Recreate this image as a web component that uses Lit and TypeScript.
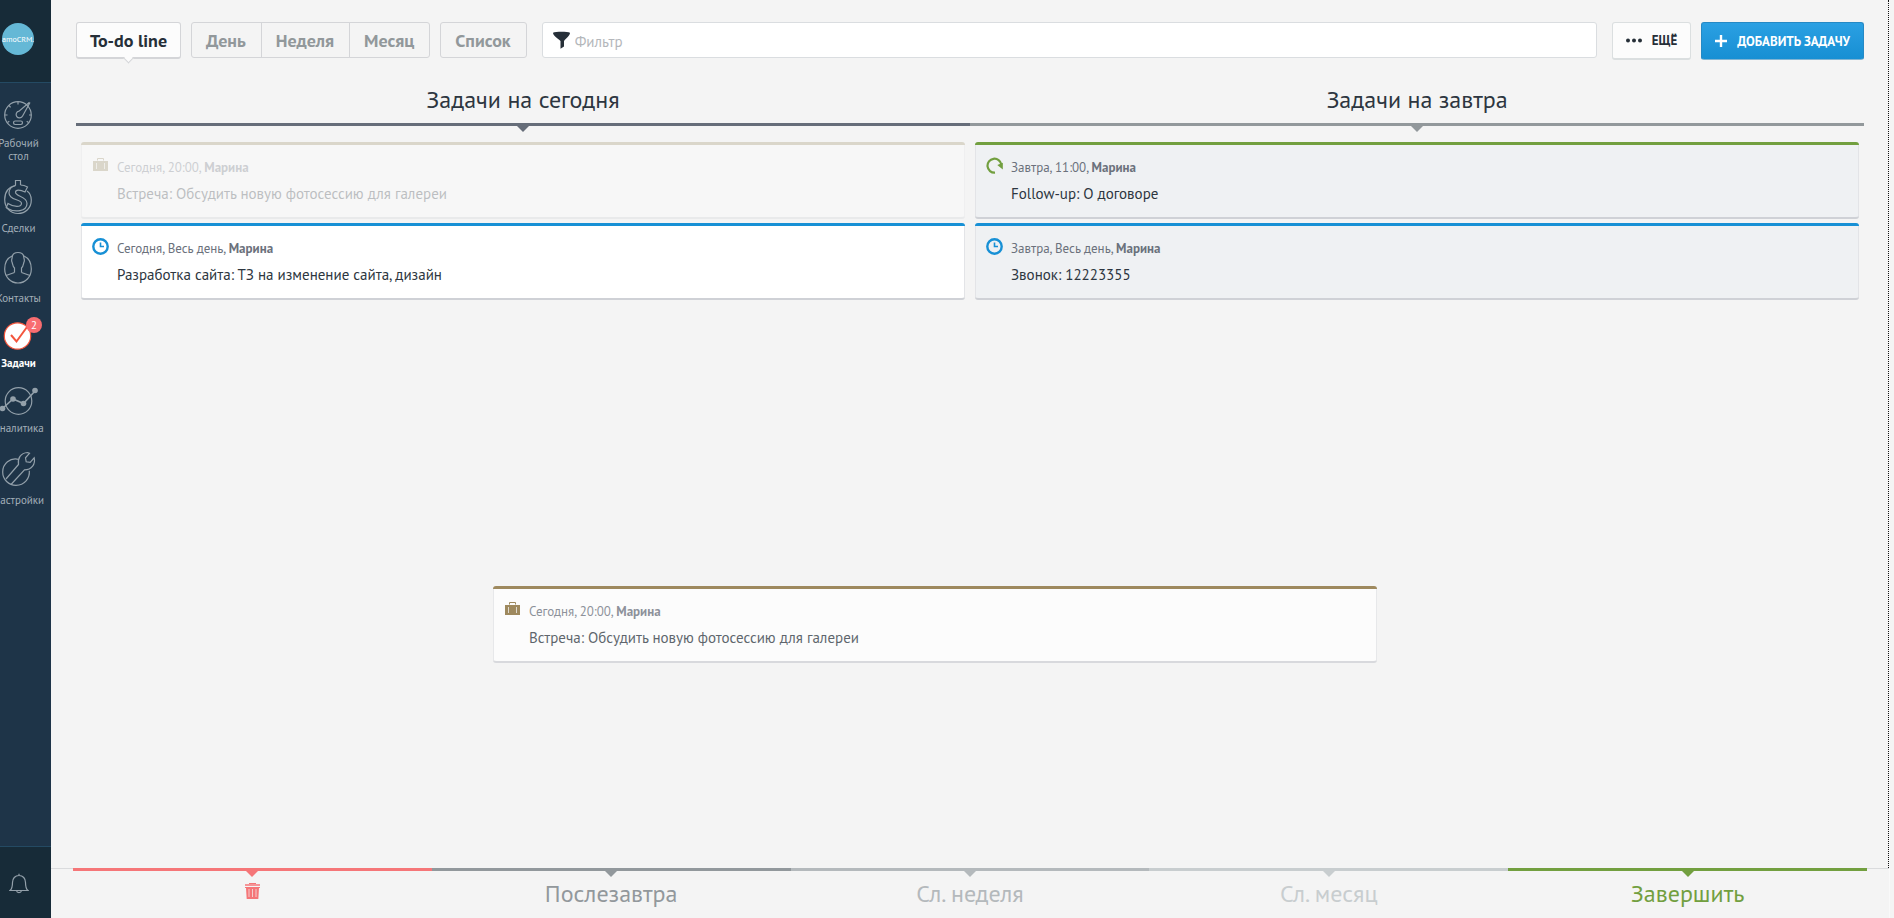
import { LitElement, html, svg, css, nothing, TemplateResult } from "lit";
import { customElement, property } from "lit/decorators.js";
import { classMap } from "lit/directives/class-map.js";

type Kind = "meeting" | "followup" | "allday";

interface Task {
  kind: Kind;
  when: string;
  owner: string;
  title: string;
}

const meeting: Task = {
  kind: "meeting",
  when: "Сегодня, 20:00",
  owner: "Марина",
  title: "Встреча: Обсудить новую фотосессию для галереи",
};

const today: Task[] = [
  meeting,
  {
    kind: "allday",
    when: "Сегодня, Весь день",
    owner: "Марина",
    title: "Разработка сайта: ТЗ на изменение сайта, дизайн",
  },
];

const tomorrow: Task[] = [
  { kind: "followup", when: "Завтра, 11:00", owner: "Марина", title: "Follow-up: О договоре" },
  { kind: "allday", when: "Завтра, Весь день", owner: "Марина", title: "Звонок: 12223355" },
];

const kindIcons: Record<Kind, TemplateResult> = {
  meeting: html`<svg width="17" height="15" viewBox="0 0 17 15" aria-hidden="true">
    <path d="M5.5 3.5v-2h6v2" fill="none" stroke="currentColor" />
    <path d="M1 4h15v10H1z" fill="currentColor" />
    <path d="M4.500 6v6M12.500 6v6" stroke="#fff" stroke-opacity=".7" />
  </svg>`,
  allday: html`<svg width="17" height="17" viewBox="0 0 17 17" aria-hidden="true">
    <circle cx="8.500" cy="8.500" r="7.200" fill="none" stroke="currentColor" stroke-width="2.400" />
    <path d="M8.500 4.500v4h3.500" fill="none" stroke="currentColor" stroke-width="1.600" />
  </svg>`,
  followup: html`<svg width="17" height="17" viewBox="0 0 17 17" aria-hidden="true">
    <path d="M9 15.700A7 7 0 1 1 15.400 7.500" fill="none" stroke="currentColor" stroke-width="2.200" />
    <path d="M16.800 5.800v6.700L11.300 8z" fill="currentColor" />
  </svg>`,
};

@customElement("task-card")
class TaskCard extends LitElement {
  @property({ attribute: false }) task!: Task;
  @property() tone = "plain";

  static styles = css`
    :host {
      display: block;
    }
    .card {
      display: grid;
      grid-template-columns: 16px 1fr;
      column-gap: 9px;
      box-sizing: border-box;
      padding: 12px 11px 14px;
      border: 0 solid #cfd1d6;
      border-top: 3px solid;
      border-bottom-width: 2px;
      border-radius: 3px;
      box-shadow: inset 1px 0 #e3e4e7, inset -1px 0 #e3e4e7;
      background: #fff;
    }
    .muted {
      background: #eff1f3;
    }
    .ghost {
      opacity: 0.28;
    }
    .dragged {
      opacity: 0.75;
      cursor: move;
    }
    .meeting {
      border-top-color: #82662c;
    }
    .meeting .icon {
      color: #82662c;
    }
    .ghost.meeting {
      border-top-color: #9a8c62;
    }
    .ghost.meeting .icon {
      color: #9a8c62;
    }
    .allday {
      border-top-color: #1790d5;
    }
    .allday .icon {
      color: #1790d5;
    }
    .followup {
      border-top-color: #729f3f;
    }
    .followup .icon {
      color: #729f3f;
    }
    .icon svg {
      display: block;
    }
    .meta {
      margin: 3px 0 0;
      font-size: 13px;
      line-height: 16px;
      color: #6b717c;
    }
    .title {
      grid-column: 2;
      margin: 9px 0 0;
      font-size: 15px;
      line-height: 18px;
      font-weight: 400;
      color: #2d3640;
    }
  `;

  render() {
    const t = this.task;
    const classes = { card: true, [t.kind]: true, [this.tone]: true };
    return html`<article class=${classMap(classes)}>
      <span class="icon">${kindIcons[t.kind]}</span>
      <p class="meta">${t.when}, <b>${t.owner}</b></p>
      <h3 class="title">${t.title}</h3>
    </article>`;
  }
}

const navItems: { label: string; badge?: string; active?: boolean; height: number; art: TemplateResult }[] = [
  {
    label: "Рабочий стол",
    height: 30,
    art: svg`
      <circle cx="17" cy="15" r="13.300"/>
      <path d="M28.500 2.200L18 11.200a3.400 3.400 0 1 0 3.600 4.800L29 2.500"/>
      <rect x="12.500" y="21" width="9" height="3.500" rx="1.700"/>
      <path d="M17 2v2.500M8 5.500l1.600 1.800M4 15h2.500M28 15h2.200M6.500 22.500l1.800-1.200M27.500 22.500l-1.800-1.200"/>`,
  },
  {
    label: "Сделки",
    height: 36,
    art: svg`
      <path d="M14.500 6.500V1.500h5V6"/>
      <path d="M14.500 6.500C7.500 8 3.700 13 3.700 20.500 3.700 29 9.500 34.500 17 34.500s13.300-5.500 13.300-13.500c0-4-1.500-7-4.300-9"/>
      <path d="M19.500 6c2 0 4.500.5 7 2l-2.500 5c-5-2.500-9.500-2.500-9.500.3 0 4.500 11.500 3.500 11.500 11.200 0 8-12 9.500-20.500 4.500"/>
      <path d="M14.500 6.500c-4.500 1.200-6.500 4-6.500 7.500 0 7.500 12.500 6 12.500 10.500 0 4-8 3.500-13.500 0L5 29"/>`,
  },
  {
    label: "Контакты",
    height: 34,
    art: svg`
      <path d="M11 5C6.500 7 3.700 12 3.700 18c0 8 6 14 13.300 14s13.300-6 13.300-14c0-6-2.800-11-7.300-13"/>
      <path d="M13.500 21.500V17C11.500 15.500 11.500 12 11 11c-1-2 .2-3 .2-5C11.500 3 14 1.500 17 1.500s5.500 1.500 5.800 4.500c0 2 1.200 3 .2 5-.5 1-.5 4.500-2.500 6v4.500"/>
      <path d="M13.500 21.500L5 24.500M20.500 21.500l8.500 3"/>`,
  },
  {
    label: "Задачи",
    badge: "2",
    active: true,
    height: 29,
    art: svg`
      <circle cx="16.500" cy="15" r="13.200" fill="#fff" stroke="#f4553c"/>
      <path d="M10 14l5.500 6.500L26 6" stroke="#f4553c" stroke-width="2"/>`,
  },
  {
    label: "Аналитика",
    height: 29,
    art: svg`
      <circle cx="17.500" cy="15" r="13.300"/>
      <path d="M1.500 22.500l10.500-9.500 10.500 4.500L34 5" stroke-width="1.600"/>
      <g fill="#93a0aa" stroke="none"><circle cx="1.500" cy="22.500" r="2.800"/><circle cx="12" cy="13" r="2.800"/><circle cx="22.500" cy="17.500" r="2.800"/><circle cx="34" cy="4.500" r="2.800"/></g>`,
  },
  {
    label: "Настройки",
    height: 36,
    art: svg`
      <path d="M18 8.500C9 6 1.700 13 1.700 21c0 7.500 6 13.300 13.300 13.300 8.500 0 14-7 13.300-14.500"/>
      <path d="M5 28L17.500 13.500c-1-6 2-11.500 9-12l2 .8-4 4.500.7 4 4 .5 4-4.500c1.500 6-2.500 12-9.700 12L10 33.500"/>`,
  },
];

const views: { label: string; active?: boolean }[][] = [
  [{ label: "To-do line", active: true }],
  [{ label: "День" }, { label: "Неделя" }, { label: "Месяц" }],
  [{ label: "Список" }],
];

@customElement("app-root")
class AppRoot extends LitElement {
  static styles = css`
    :host {
      display: flex;
      height: 100vh;
      background: #f4f4f4;
      font-family: "PT Sans", "Noto Sans", sans-serif;
      color: #2d3640;
    }
    button,
    input {
      font-family: inherit;
      margin: 0;
      cursor: pointer;
    }

    .sidebar {
      flex: none;
      display: flex;
      flex-direction: column;
      width: 51px;
      overflow: hidden;
      background: #1e3448;
    }
    .rail {
      flex: 1;
      display: flex;
      flex-direction: column;
      width: 65px;
      margin-left: -14px;
    }
    .account {
      display: flex;
      justify-content: center;
      padding: 23px 1px 27px 0;
      border-bottom: 1px solid #244a63;
      background: #172b38;
    }
    .avatar {
      display: flex;
      align-items: center;
      justify-content: center;
      width: 32px;
      height: 32px;
      border-radius: 50%;
      background: #65b8d6;
      color: #fff;
      font-size: 8px;
      text-decoration: none;
    }
    .menu {
      flex: 1;
      display: flex;
      flex-direction: column;
      gap: 16px;
      padding: 17px 0;
    }
    .item {
      display: flex;
      flex-direction: column;
      align-items: center;
      gap: 7px;
      font-size: 11px;
      line-height: 13px;
      text-align: center;
      color: #a3afb8;
      text-decoration: none;
    }
    .item.active {
      color: #fff;
      font-weight: 700;
    }
    .label {
      width: 54px;
    }
    .glyph {
      position: relative;
      display: block;
    }
    .glyph svg {
      display: block;
      overflow: visible;
      fill: none;
      stroke: #93a0aa;
      stroke-width: 1.2;
    }
    .badge {
      position: absolute;
      top: -4px;
      right: -6px;
      width: 16px;
      height: 16px;
      border-radius: 50%;
      background: #f86d70;
      color: #fff;
      font-size: 11px;
      line-height: 16px;
      font-weight: 400;
    }
    .bell {
      display: flex;
      justify-content: center;
      padding: 26px 0 24px;
      border: 0;
      border-top: 1px solid #244a63;
      background: #172b38;
    }

    .main {
      flex: 1;
      min-width: 0;
      display: flex;
      flex-direction: column;
      margin-right: 4px;
      border-right: 1px solid #f9f9f9;
    }
    .board {
      flex: 1;
      display: flex;
      flex-direction: column;
      padding: 22px 24px 0 25px;
      border-right: 1px dotted #111;
    }

    .toolbar {
      display: flex;
      align-items: flex-start;
      gap: 10px;
    }
    .group {
      display: flex;
    }
    .view {
      position: relative;
      box-sizing: border-box;
      height: 36px;
      padding: 0 15px 0 14px;
      border: 1px solid #d4d5d8;
      margin-left: -1px;
      background: #f4f4f4;
      color: #92989b;
      font-size: 18px;
      font-weight: 700;
      line-height: 36px;
    }
    .view:first-child {
      margin-left: 0;
      border-radius: 3px 0 0 3px;
    }
    .view:last-child {
      border-radius: 0 3px 3px 0;
    }
    .view:only-child {
      border-radius: 3px;
    }
    .view.active {
      height: 37px;
      padding: 0 13px;
      border-bottom-width: 2px;
      background: #fcfcfc;
      color: #262f38;
    }
    .view.active::after {
      content: "";
      position: absolute;
      left: 50%;
      bottom: -5px;
      width: 6px;
      height: 6px;
      margin-left: -4px;
      border: solid #d4d5d8;
      border-width: 0 1px 1px 0;
      background: #fcfcfc;
      transform: rotate(45deg);
    }
    .filter {
      flex: 1;
      display: flex;
      align-items: center;
      gap: 5px;
      box-sizing: border-box;
      height: 36px;
      margin: 0 5px;
      padding: 0 10px;
      border: 1px solid #dadde0;
      border-radius: 3px;
      background: #fff;
    }
    .filter input {
      flex: 1;
      min-width: 0;
      padding: 3px 0 0;
      border: 0;
      outline: 0;
      background: none;
      font-size: 15px;
      cursor: text;
    }
    .filter input::placeholder {
      color: #b4b7bb;
      opacity: 1;
    }
    .command {
      display: flex;
      align-items: center;
      gap: 10px;
      box-sizing: border-box;
      height: 38px;
      padding: 0 13px;
      border: 1px solid #dbdfe0;
      border-bottom-width: 2px;
      border-radius: 3px;
      background: #fcfcfc;
      color: #262f38;
      font-size: 13px;
      font-weight: 700;
      text-transform: uppercase;
    }
    .command.primary {
      border: 1px solid #2589c5;
      border-bottom-color: #81b5d4;
      background: linear-gradient(#2ba0e3, #178fd3);
      color: #fff;
    }

    .columns {
      display: grid;
      grid-template-columns: 1fr 1fr;
      margin-top: 24px;
    }
    .heading {
      position: relative;
      margin: 0 0 16px;
      padding-bottom: 7px;
      border-bottom: 3px solid #666d79;
      font-size: 24px;
      line-height: 32px;
      font-weight: 400;
      text-align: center;
      color: #2d3640;
    }
    .heading.next {
      border-color: #92989b;
    }
    .heading::after,
    .drop::after {
      content: "";
      position: absolute;
      left: 50%;
      top: 100%;
      margin-left: -6px;
      border: 6px solid transparent;
      border-bottom: 0;
      border-top-color: #666d79;
    }
    .heading::after {
      margin-top: 3px;
    }
    .heading.next::after {
      border-top-color: #92989b;
    }
    .list {
      display: flex;
      flex-direction: column;
      gap: 4px;
      padding: 0 5px;
    }
    .floating {
      position: absolute;
      left: 493px;
      top: 586px;
      width: calc(50% - 63px);
    }

    .footer {
      display: grid;
      grid-template-columns: repeat(5, 1fr);
      padding: 0 22px;
      border-top: 1px solid #dadbdd;
    }
    .drop {
      position: relative;
      display: flex;
      justify-content: center;
      box-sizing: border-box;
      height: 50px;
      margin-top: -1px;
      padding: 7px 0 0;
      border: 0;
      border-top: 3px solid;
      background: none;
      font-size: 24px;
      line-height: 32px;
    }
    .drop::after {
      top: 0;
      border-top-color: currentColor;
    }
    .trash {
      padding-top: 12px;
      color: #f57678;
    }
    .after {
      color: #92989c;
    }
    .week {
      color: #b4b9bc;
    }
    .month {
      color: #c8cdcf;
    }
    .done {
      color: #729f3f;
    }
  `;

  private nav() {
    return html`<aside class="sidebar">
      <div class="rail">
        <div class="account"><a class="avatar" href="#account">amoCRM.</a></div>
        <nav class="menu">
          ${navItems.map(
            (n) => html`<a class=${classMap({ item: true, active: !!n.active })} href="#">
              <span class="glyph">
                <svg width="35" height=${n.height} viewBox="0 0 35 ${n.height}" aria-hidden="true">${n.art}</svg>
                ${n.badge ? html`<span class="badge">${n.badge}</span>` : nothing}
              </span>
              <span class="label">${n.label}</span>
            </a>`
          )}
        </nav>
        <button class="bell" aria-label="Уведомления">
          <svg width="20" height="21" viewBox="0 0 20 21" fill="none" stroke="#93a0aa" stroke-width="1.200" aria-hidden="true">
            <path d="M1 17.500h18c-2-1.500-2.500-3-2.500-8 0-4-2.500-7-6.500-7s-6.500 3-6.500 7c0 5-.5 6.500-2.500 8zM10 2.500V.8M7.500 17.700c.3 1.500 1.200 2 2.500 2s2.200-.5 2.500-2" />
          </svg>
        </button>
      </div>
    </aside>`;
  }

  private toolbar() {
    return html`<header class="toolbar">
      ${views.map(
        (g) => html`<div class="group">
          ${g.map((v) => html`<button class=${classMap({ view: true, active: !!v.active })}>${v.label}</button>`)}
        </div>`
      )}
      <label class="filter">
        <svg width="17" height="18" viewBox="0 0 17 18" fill="#262f38" aria-hidden="true">
          <path d="M0 1.800C2.500.4 14.500.4 17 1.800c0 2.500-3.500 5.200-6 8.200v5.500L7.500 17.800V10C4 7 0 4.300 0 1.800z" />
        </svg>
        <input type="text" placeholder="Фильтр" aria-label="Фильтр" />
      </label>
      <button class="command">
        <svg width="16" height="5" viewBox="0 0 16 5" fill="#262f38" aria-hidden="true">
          <circle cx="2" cy="2.500" r="2" /><circle cx="8" cy="2.500" r="2" /><circle cx="14" cy="2.500" r="2" />
        </svg>
        Ещё
      </button>
      <button class="command primary">
        <svg width="12" height="12" viewBox="0 0 12 12" stroke="#fff" stroke-width="2.400" aria-hidden="true">
          <path d="M6 0v12M0 6h12" />
        </svg>
        Добавить задачу
      </button>
    </header>`;
  }

  render() {
    return html`
      ${this.nav()}
      <main class="main">
        <div class="board">
          ${this.toolbar()}
          <div class="columns">
            <section>
              <h2 class="heading">Задачи на сегодня</h2>
              <div class="list">
                ${today.map((t, i) => html`<task-card .task=${t} tone=${i === 0 ? "ghost" : "plain"}></task-card>`)}
              </div>
            </section>
            <section>
              <h2 class="heading next">Задачи на завтра</h2>
              <div class="list">${tomorrow.map((t) => html`<task-card .task=${t} tone="muted"></task-card>`)}</div>
            </section>
          </div>
        </div>
        <footer class="footer">
          <button class="drop trash" aria-label="Удалить">
            <svg width="15" height="16" viewBox="0 0 15 16" fill="currentColor" aria-hidden="true">
              <path d="M4 0h7v1H4z" />
              <path d="M0 1h15v2H0z" opacity=".75" />
              <path d="M0 4h15v1H0z" />
              <path d="M1 5h13l-.7 11H1.700z" />
              <path d="M4 6v8M7.500 6v8M11 6v8" stroke="#f4f4f4" stroke-opacity=".7" />
            </svg>
          </button>
          <button class="drop after">Послезавтра</button>
          <button class="drop week">Сл. неделя</button>
          <button class="drop month">Сл. месяц</button>
          <button class="drop done">Завершить</button>
        </footer>
      </main>
      <task-card class="floating" .task=${meeting} tone="dragged"></task-card>
    `;
  }
}
